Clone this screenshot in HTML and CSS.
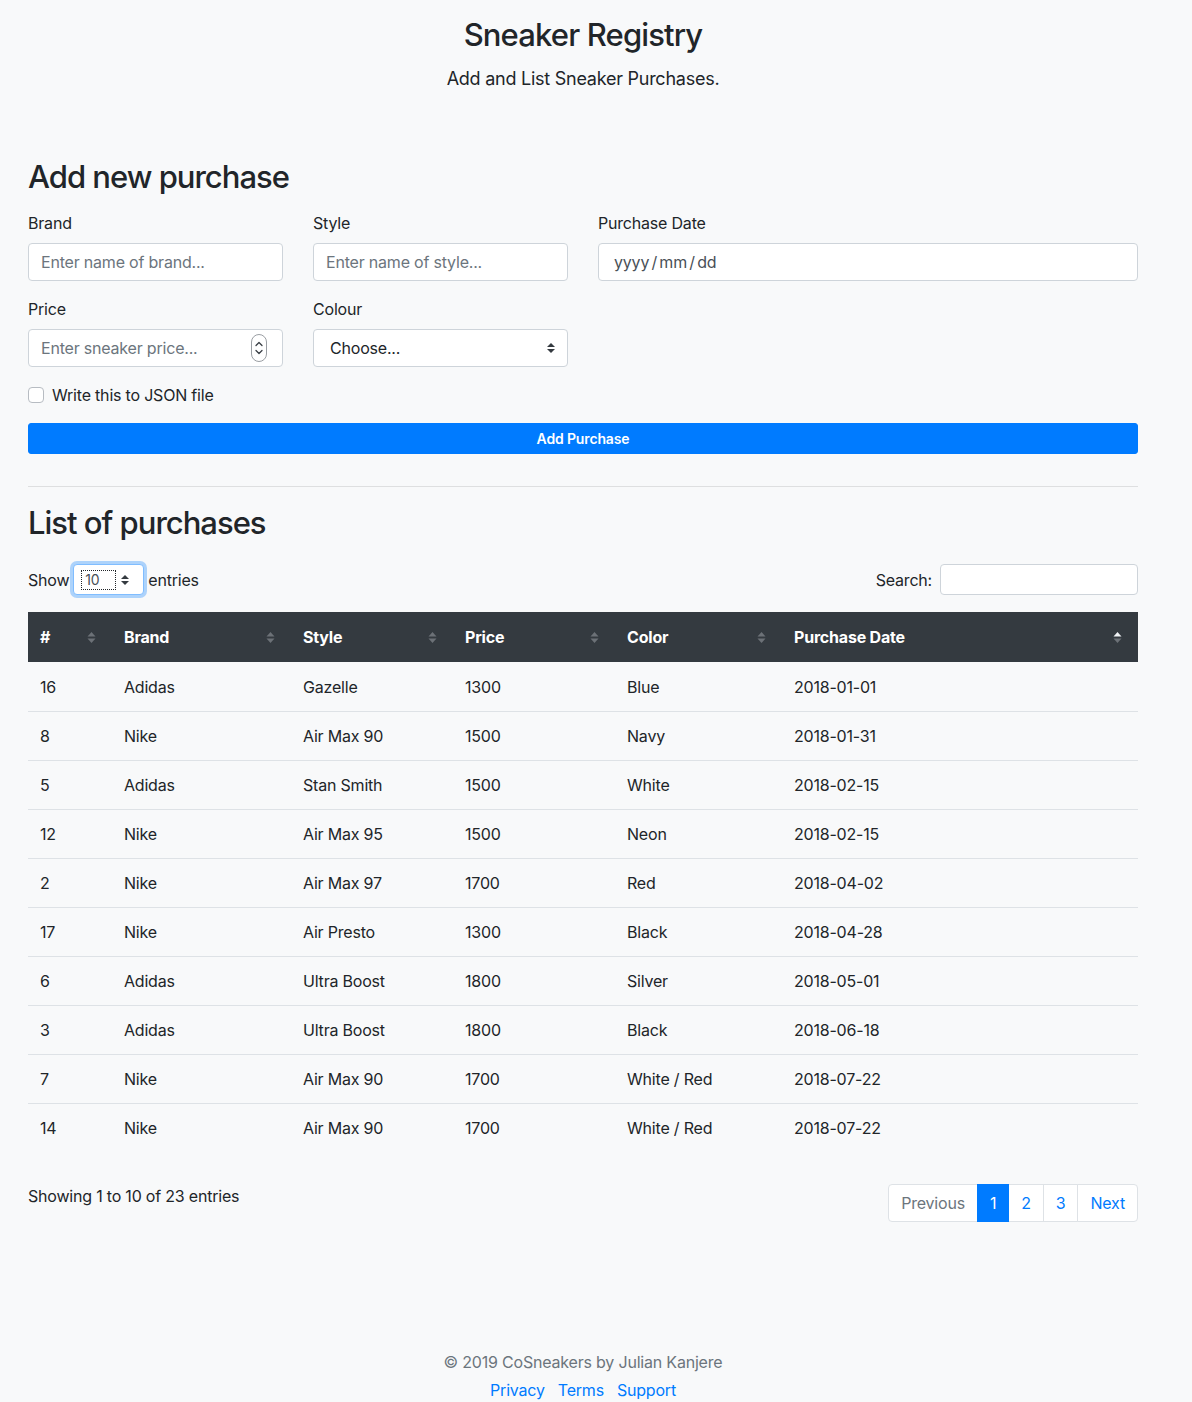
FILE: index.html
```html
<!DOCTYPE html>
<html lang="en">
<head>
<meta charset="utf-8">
<title>Sneaker Registry</title>
<link rel="stylesheet" href="styles.css">
</head>
<body>
<div class="page">
  <header class="hero">
    <h1 class="title">Sneaker Registry</h1>
    <p class="lead">Add and List Sneaker Purchases.</p>
  </header>

  <section class="add">
    <h2 class="section-title">Add new purchase</h2>
    <div class="form-grid">
      <div class="group">
        <label class="label">Brand</label>
        <input class="input" type="text" placeholder="Enter name of brand...">
      </div>
      <div class="group">
        <label class="label">Style</label>
        <input class="input" type="text" placeholder="Enter name of style...">
      </div>
      <div class="group span2">
        <label class="label">Purchase Date</label>
        <div class="input date">yyyy / mm / dd</div>
      </div>
      <div class="group">
        <label class="label">Price</label>
        <div class="input number">
          <input class="bare" type="text" placeholder="Enter sneaker price...">
          <svg class="spin" width="16" height="28" viewBox="0 0 16 28"><rect x="0.5" y="0.5" width="15" height="27" rx="7.5" fill="#fff" stroke="#9a9ea3"/><path d="M5 11.5 L8 8.5 L11 11.5" fill="none" stroke="#3a3f45" stroke-width="1.3" stroke-linecap="round" stroke-linejoin="round"/><path d="M5 16.5 L8 19.5 L11 16.5" fill="none" stroke="#3a3f45" stroke-width="1.3" stroke-linecap="round" stroke-linejoin="round"/></svg>
        </div>
      </div>
      <div class="group">
        <label class="label">Colour</label>
        <div class="input select">
          <span>Choose...</span>
          <svg class="caret" width="8" height="10" viewBox="0 0 4 5"><path fill="#343a40" d="M2 0L0 2h4zm0 5L0 3h4z"/></svg>
        </div>
      </div>
    </div>
    <div class="check">
      <span class="box"></span>
      <span>Write this to JSON file</span>
    </div>
    <button class="btn" type="button">Add Purchase</button>
  </section>

  <hr class="rule">

  <section class="list">
    <h2 class="section-title">List of purchases</h2>
    <div class="controls">
      <div class="length">
        <span>Show</span>
        <div class="small-select">
          <span class="focus-val">10</span>
          <svg class="caret" width="8" height="10" viewBox="0 0 4 5"><path fill="#343a40" d="M2 0L0 2h4zm0 5L0 3h4z"/></svg>
        </div>
        <span>entries</span>
      </div>
      <div class="search">
        <span>Search:</span>
        <input class="search-input" type="text">
      </div>
    </div>

    <table class="table">
      <colgroup>
        <col class="c1"><col class="c2"><col class="c3"><col class="c4"><col class="c5"><col class="c6">
      </colgroup>
      <thead>
        <tr>
          <th><div class="th"><span>#</span><svg class="sort" width="9" height="13" viewBox="0 0 9 13"><path d="M0.5 5.5 L4.5 1 L8.5 5.5Z" fill="#6c7177"/><path d="M0.5 7.5 L4.5 12 L8.5 7.5Z" fill="#6c7177"/></svg></div></th>
          <th><div class="th"><span>Brand</span><svg class="sort" width="9" height="13" viewBox="0 0 9 13"><path d="M0.5 5.5 L4.5 1 L8.5 5.5Z" fill="#6c7177"/><path d="M0.5 7.5 L4.5 12 L8.5 7.5Z" fill="#6c7177"/></svg></div></th>
          <th><div class="th"><span>Style</span><svg class="sort" width="9" height="13" viewBox="0 0 9 13"><path d="M0.5 5.5 L4.5 1 L8.5 5.5Z" fill="#6c7177"/><path d="M0.5 7.5 L4.5 12 L8.5 7.5Z" fill="#6c7177"/></svg></div></th>
          <th><div class="th"><span>Price</span><svg class="sort" width="9" height="13" viewBox="0 0 9 13"><path d="M0.5 5.5 L4.5 1 L8.5 5.5Z" fill="#6c7177"/><path d="M0.5 7.5 L4.5 12 L8.5 7.5Z" fill="#6c7177"/></svg></div></th>
          <th><div class="th"><span>Color</span><svg class="sort" width="9" height="13" viewBox="0 0 9 13"><path d="M0.5 5.5 L4.5 1 L8.5 5.5Z" fill="#6c7177"/><path d="M0.5 7.5 L4.5 12 L8.5 7.5Z" fill="#6c7177"/></svg></div></th>
          <th><div class="th"><span>Purchase Date</span><svg class="sort" width="9" height="13" viewBox="0 0 9 13"><path d="M0.5 5.5 L4.5 1 L8.5 5.5Z" fill="#f1f3f5"/><path d="M0.5 7.5 L4.5 12 L8.5 7.5Z" fill="#6c7177"/></svg></div></th>
        </tr>
      </thead>
      <tbody>
        <tr><td>16</td><td>Adidas</td><td>Gazelle</td><td>1300</td><td>Blue</td><td>2018-01-01</td></tr>
        <tr><td>8</td><td>Nike</td><td>Air Max 90</td><td>1500</td><td>Navy</td><td>2018-01-31</td></tr>
        <tr><td>5</td><td>Adidas</td><td>Stan Smith</td><td>1500</td><td>White</td><td>2018-02-15</td></tr>
        <tr><td>12</td><td>Nike</td><td>Air Max 95</td><td>1500</td><td>Neon</td><td>2018-02-15</td></tr>
        <tr><td>2</td><td>Nike</td><td>Air Max 97</td><td>1700</td><td>Red</td><td>2018-04-02</td></tr>
        <tr><td>17</td><td>Nike</td><td>Air Presto</td><td>1300</td><td>Black</td><td>2018-04-28</td></tr>
        <tr><td>6</td><td>Adidas</td><td>Ultra Boost</td><td>1800</td><td>Silver</td><td>2018-05-01</td></tr>
        <tr><td>3</td><td>Adidas</td><td>Ultra Boost</td><td>1800</td><td>Black</td><td>2018-06-18</td></tr>
        <tr><td>7</td><td>Nike</td><td>Air Max 90</td><td>1700</td><td>White / Red</td><td>2018-07-22</td></tr>
        <tr><td>14</td><td>Nike</td><td>Air Max 90</td><td>1700</td><td>White / Red</td><td>2018-07-22</td></tr>
      </tbody>
    </table>

    <div class="table-foot">
      <div class="info">Showing 1 to 10 of 23 entries</div>
      <ul class="pagination">
        <li class="page-item disabled">Previous</li>
        <li class="page-item active">1</li>
        <li class="page-item">2</li>
        <li class="page-item">3</li>
        <li class="page-item">Next</li>
      </ul>
    </div>
  </section>

  <footer class="footer">
    <p class="copy">© 2019 CoSneakers by Julian Kanjere</p>
    <ul class="links">
      <li><a href="#">Privacy</a></li>
      <li><a href="#">Terms</a></li>
      <li><a href="#">Support</a></li>
    </ul>
  </footer>
</div>
</body>
</html>
```

FILE: styles.css
```css
* { box-sizing: border-box; }

html, body {
  margin: 0;
  padding: 0;
  background: #f8f9fa;
}

body {
  font-family: Inter, "Liberation Sans", "Noto Sans", sans-serif;
  font-size: 16px;
  line-height: 24px;
  letter-spacing: -0.2px;
  color: #212529;
}

.page {
  width: 1110px;
  margin-left: 28px;
}

.hero {
  text-align: center;
  padding-top: 16px;
}

.title {
  margin: 0;
  font-size: 31px;
  line-height: 38px;
  font-weight: 500;
  letter-spacing: -0.85px;
}

.lead {
  margin: 11px 0 0;
  font-size: 18px;
  line-height: 27px;
  font-weight: 400;
  letter-spacing: -0.25px;
}

.add {
  margin-top: 66px;
}

.section-title {
  margin: 0 0 15px;
  font-size: 31px;
  line-height: 38px;
  font-weight: 500;
  letter-spacing: -1px;
}

.form-grid {
  display: grid;
  grid-template-columns: repeat(4, 1fr);
  column-gap: 30px;
  row-gap: 16px;
}

.span2 { grid-column: span 2; }

.group {
  display: flex;
  flex-direction: column;
}

.label {
  display: block;
  margin-bottom: 8px;
  font-size: 16px;
  line-height: 24px;
}

.input {
  height: 38px;
  width: 100%;
  padding: 6px 12px;
  font-family: inherit;
  font-size: 16px;
  line-height: 24px;
  letter-spacing: -0.2px;
  color: #495057;
  background: #fff;
  border: 1px solid #ced4da;
  border-radius: 4px;
  outline: none;
}

.input::placeholder, .bare::placeholder {
  color: #6c757d;
  opacity: 1;
}

.date {
  padding-left: 15px;
  color: #495057;
  word-spacing: -2px;
}

.number {
  display: flex;
  align-items: center;
  justify-content: space-between;
  padding-right: 15px;
}

.bare {
  border: 0;
  outline: none;
  background: transparent;
  padding: 0;
  font-family: inherit;
  font-size: 16px;
  line-height: 24px;
  letter-spacing: -0.2px;
  color: #495057;
  width: 200px;
}

.spin { display: block; }

.select {
  display: flex;
  align-items: center;
  justify-content: space-between;
  padding-left: 16px;
  padding-right: 12px;
  color: #212529;
}

.caret { display: block; }

.check {
  display: flex;
  align-items: center;
  gap: 8px;
  margin-top: 16px;
  line-height: 24px;
}

.box {
  width: 16px;
  height: 16px;
  border: 1px solid #b7bcc2;
  border-radius: 4px;
  background: #fff;
}

.btn {
  display: block;
  width: 100%;
  height: 31px;
  margin-top: 16px;
  padding: 0;
  border: 1px solid #007bff;
  border-radius: 3px;
  background: #007bff;
  color: #fff;
  font-family: inherit;
  font-size: 14px;
  font-weight: 600;
  line-height: 21px;
  letter-spacing: -0.15px;
}

.rule {
  margin: 32px 0 0;
  border: 0;
  border-top: 1px solid rgba(0, 0, 0, 0.1);
}

.list {
  margin-top: 17px;
}

.list .section-title {
  margin-bottom: 22px;
}

.controls {
  display: flex;
  justify-content: space-between;
  align-items: center;
  height: 31px;
  margin-bottom: 17px;
}

.length {
  display: flex;
  align-items: center;
}

.small-select {
  display: flex;
  align-items: center;
  justify-content: space-between;
  width: 71px;
  height: 31px;
  margin: 0 4px;
  padding: 0 14px 0 8px;
  background: #fff;
  border: 1px solid #80bdff;
  border-radius: 4px;
  box-shadow: 0 0 0 3px rgba(0, 123, 255, 0.3);
  font-size: 14px;
}

.focus-val {
  display: block;
  width: 33px;
  height: 18px;
  padding-left: 3px;
  line-height: 17px;
  outline: 1px dotted #212529;
  color: #495057;
}

.search {
  display: flex;
  align-items: center;
  gap: 8px;
}

.search-input {
  width: 198px;
  height: 31px;
  padding: 4px 8px;
  border: 1px solid #ced4da;
  border-radius: 4px;
  background: #fff;
  outline: none;
}

.table {
  width: 1110px;
  border-collapse: collapse;
  table-layout: fixed;
}

.c1 { width: 84px; }
.c2 { width: 179px; }
.c3 { width: 162px; }
.c4 { width: 162px; }
.c5 { width: 167px; }
.c6 { width: 356px; }

.table th {
  background: #343a40;
  color: #fff;
  font-weight: 700;
  text-align: left;
  padding: 13px 16px 11px 12px;
  border-bottom: 2px solid #343a40;
  line-height: 24px;
}

.th {
  display: flex;
  align-items: center;
  justify-content: space-between;
}

.sort { display: block; flex: none; }

.table td {
  padding: 12px;
  line-height: 24px;
  border-top: 1px solid #dee2e6;
}

.table tbody tr:first-child td {
  border-top: 0;
  padding-top: 13px;
}

.table-foot {
  display: flex;
  justify-content: space-between;
  align-items: flex-start;
  margin-top: 32px;
}

.info {
  line-height: 24px;
}

.pagination {
  display: flex;
  margin: 0;
  padding: 0;
  list-style: none;
}

.page-item {
  padding: 8px 12px;
  line-height: 20px;
  border: 1px solid #dee2e6;
  margin-left: -1px;
  background: #fff;
  color: #007bff;
}

.page-item:first-child {
  margin-left: 0;
  border-radius: 4px 0 0 4px;
}

.page-item:last-child {
  border-radius: 0 4px 4px 0;
}

.page-item.disabled {
  color: #6c757d;
}

.page-item.active {
  background: #007bff;
  border-color: #007bff;
  color: #fff;
  position: relative;
  z-index: 1;
}

.footer {
  margin-top: 128px;
  text-align: center;
}

.copy {
  margin: 0;
  color: #6c757d;
  line-height: 24px;
}

.links {
  display: flex;
  justify-content: center;
  gap: 13px;
  margin: 4px 0 0;
  padding: 0;
  list-style: none;
}

.links a {
  color: #007bff;
  text-decoration: none;
}
```
